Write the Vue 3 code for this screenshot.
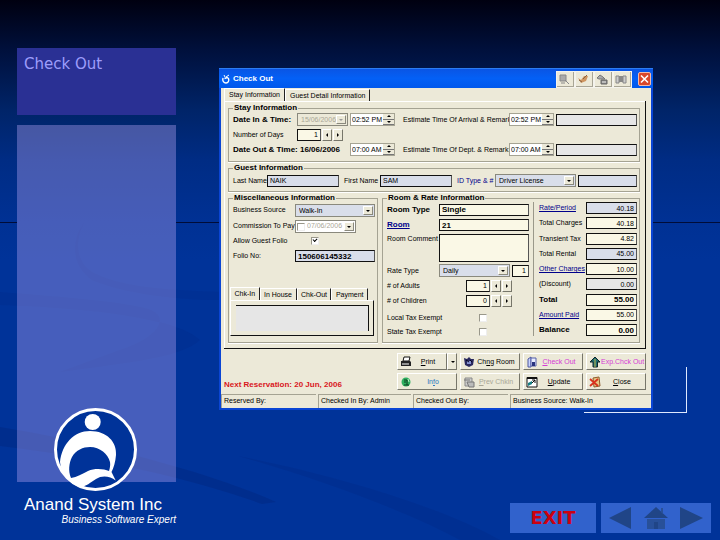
<script setup>
import { ref } from 'vue'

const tools = ['Find', 'Notes', 'Lock', 'Rooms']
const timeRows = [
  { label: 'Estimate Time Of Arrival & Remark:', time: '02:52 PM' },
  { label: 'Estimate Time Of Dept. & Remark:', time: '07:00 AM' },
]
const miscTabs = ['Chk-In', 'In House', 'Chk-Out', 'Payment']
const charges = [
  { id: 'rate', label: 'Rate/Period', value: '40.18', link: true, tone: 'blue' },
  { id: 'charges', label: 'Total Charges', value: '40.18' },
  { id: 'transient', label: 'Transient Tax', value: '4.82' },
  { id: 'rental', label: 'Total Rental', value: '45.00', tone: 'blue' },
  { id: 'other', label: 'Other Charges', value: '10.00', link: true },
  { id: 'discount', label: '(Discount)', value: '0.00', tone: 'grey' },
  { id: 'total', label: 'Total', value: '55.00', bold: true },
  { id: 'paid', label: 'Amount Paid', value: '55.00', link: true },
  { id: 'balance', label: 'Balance', value: '0.00', bold: true },
]
const counters = [
  { id: 'adults', label: '# of Adults', value: '1' },
  { id: 'children', label: '# of Children', value: '0' },
]
const status = ['Reserved By:', 'Checked In By: Admin', 'Checked Out By:', 'Business Source: Walk-In']
const allowGuest = ref(true)
</script>

<template>
  <div class="slide">
    <svg class="backdrop" viewBox="0 0 720 540" preserveAspectRatio="none" aria-hidden="true">
      <path d="M84 223C74 240 76 262 92 272C120 288 170 290 220 292V300C170 300 120 292 92 280C70 264 72 240 84 223Z" fill="#001a66" opacity=".09" />
      <path d="M0 292C60 297 120 301 148 309C172 317 158 338 120 350L60 372C130 362 180 358 200 340C180 320 100 308 0 305Z" fill="#001a66" opacity=".09" />
      <path d="M0 427C80 440 200 468 276 502L262 504C190 478 100 458 0 446Z" fill="#001a66" opacity=".22" />
      <path d="M238 456C330 474 440 506 500 540H460C400 508 310 476 238 456Z" fill="#001a66" opacity=".12" />
      <path d="M0 222.500H17M176 222.500H720" stroke="#000c38" stroke-width="1" />
    </svg>

    <aside class="side">
      <h1 class="heading">Check Out</h1>
      <div class="panel">
        <svg class="logo" viewBox="0 0 83 83" role="img" aria-label="Anand System">
          <circle cx="41.500" cy="41.500" r="40" fill="#003399" stroke="#fff" stroke-width="3" />
          <circle cx="38.700" cy="14" r="8" fill="#fff" />
          <path d="M6 54C8 36 20 23 36 23C53 23 63 34 62 47C61.500 54 59.500 60 57.500 64L61.700 72.500C56 68 48 67 42 71C37 74 32 79 25 79C14 74 7 66 6 54Z" fill="#fff" />
          <path d="M17 70C14 63 15 55 18 49C22 42 29 39 36 39C46 39 54 46 56 54C56.500 57 56 60 55 63C50 61 41 60 34 63C28 66 23 69 17 70Z" fill="#003399" />
        </svg>
      </div>
    </aside>

    <main class="stage">
      <form class="window" @submit.prevent>
        <header class="titlebar">
          <svg class="app-icon" viewBox="0 0 10 10" aria-hidden="true">
            <path d="M2 4C1 7 3 9 5 9S8.500 7 7.500 4.500L6 3.500L3.500 4.500" fill="none" stroke="#fff" stroke-width="1.400" />
            <path d="M5 3L8 1M3 1L4 3" stroke="#fff" />
          </svg>
          <span class="title">Check Out</span>
          <div class="tools">
            <button v-for="(t, i) in tools" :key="t" type="button" class="tool" :aria-label="t">
              <svg viewBox="0 0 14 13" aria-hidden="true">
                <template v-if="i === 0"><path d="M3 2H9V8H3Z" fill="#aaa" stroke="#888" /><path d="M4 10H8M8 7L12 11" stroke="#888" fill="none" /></template>
                <template v-else-if="i === 1"><path d="M2 5L5 7L8 3L12 3L10 8L5 10Z" fill="#cf9560" /><path d="M7 6L11 2M3 7L6 9" stroke="#896342" /></template>
                <template v-else-if="i === 2"><path d="M2 5L5 2L8 4L10 6H4Z" fill="#aaa" stroke="#777" /><path d="M6 7H12V11H6Z" fill="#888" stroke="#666" /><path d="M7 9H11" stroke="#eee" /></template>
                <template v-else><path d="M2 3H5V10H2ZM9 3H12V10H9Z" fill="#ccc" stroke="#888" /><path d="M5 3H9V9H5Z" fill="#888" /></template>
              </svg>
            </button>
          </div>
          <button type="button" class="close" aria-label="Close window">
            <svg viewBox="0 0 11 12" aria-hidden="true"><path d="M2 2.500L9 9.500M9 2.500L2 9.500" stroke="#fff" stroke-width="1.600" /></svg>
          </button>
        </header>

        <div class="tabs">
          <button type="button" class="tab active">Stay Information</button>
          <button type="button" class="tab">Guest Detail Information</button>
        </div>

        <div class="page">
          <fieldset class="group stay">
            <legend>Stay Information</legend>
            <div class="stay-row">
              <label class="bold" for="date-in">Date In &amp; Time:</label>
              <span class="combo disabled"><input id="date-in" value="15/06/2006" disabled /><button type="button" class="arrow" disabled aria-label="Open calendar"></button></span>
              <span class="spin"><input value="02:52 PM" aria-label="Time in" /><span class="steps"><button type="button" class="up" aria-label="Later"></button><button type="button" class="down" aria-label="Earlier"></button></span></span>
              <label for="remark-0">{{ timeRows[0].label }}</label>
              <span class="spin"><input :value="timeRows[0].time" aria-label="Estimated arrival" /><span class="steps"><button type="button" class="up" aria-label="Later"></button><button type="button" class="down" aria-label="Earlier"></button></span></span>
              <input id="remark-0" class="field grey" />
            </div>
            <div class="stay-row">
              <label for="days">Number of Days</label>
              <span class="counter"><input id="days" class="field num" value="1" /><button type="button" class="step prev" aria-label="Fewer"></button><button type="button" class="step next" aria-label="More"></button></span>
            </div>
            <div class="stay-row">
              <span class="bold wide">Date Out &amp; Time: 16/06/2006</span>
              <span class="spin"><input value="07:00 AM" aria-label="Time out" /><span class="steps"><button type="button" class="up" aria-label="Later"></button><button type="button" class="down" aria-label="Earlier"></button></span></span>
              <label for="remark-1">{{ timeRows[1].label }}</label>
              <span class="spin"><input :value="timeRows[1].time" aria-label="Estimated departure" /><span class="steps"><button type="button" class="up" aria-label="Later"></button><button type="button" class="down" aria-label="Earlier"></button></span></span>
              <input id="remark-1" class="field grey" />
            </div>
          </fieldset>

          <fieldset class="group guest">
            <legend>Guest Information</legend>
            <div class="guest-row">
              <label for="last">Last Name</label>
              <input id="last" class="field blue" value="NAIK" />
              <label class="inset" for="first">First Name</label>
              <input id="first" class="field blue" value="SAM" />
              <label class="inset navy" for="idtype">ID Type &amp; #</label>
              <span class="combo blue"><select id="idtype"><option>Driver License</option></select><span class="arrow"></span></span>
              <input class="field blue" aria-label="ID number" />
            </div>
          </fieldset>

          <div class="columns">
            <fieldset class="group misc">
              <legend>Miscellaneous Information</legend>
              <div class="misc-form">
                <label for="source">Business Source</label>
                <span class="combo blue"><select id="source"><option>Walk-In</option></select><span class="arrow"></span></span>
                <label for="commission">Commission To Pay</label>
                <span class="combo disabled white short"><input type="checkbox" class="check" aria-label="Use commission date" /><input id="commission" value="07/06/2006" disabled /><button type="button" class="arrow" aria-label="Open calendar"></button></span>
                <label for="allow">Allow Guest Folio</label>
                <input id="allow" v-model="allowGuest" type="checkbox" class="check allow" />
                <label for="folio">Folio No:</label>
                <input id="folio" class="field blue bold" value="150606145332" />
              </div>
              <div class="notes">
                <div class="tabs small">
                  <button v-for="(t, i) in miscTabs" :key="t" type="button" class="tab" :class="{ active: i === 0 }">{{ t }}</button>
                </div>
                <div class="notes-page"><textarea aria-label="Notes"></textarea></div>
              </div>
            </fieldset>

            <fieldset class="group room">
              <legend>Room &amp; Rate Information</legend>
              <div class="room-form">
                <label class="bold" for="roomtype">Room Type</label>
                <input id="roomtype" class="field bold" value="Single" />
                <a class="bold" href="#room">Room</a>
                <input id="room" class="field bold" value="21" aria-label="Room" />
                <label class="top" for="comment">Room Comment</label>
                <textarea id="comment" class="field"></textarea>
                <label for="ratetype">Rate Type</label>
                <span class="rate"><span class="combo blue"><select id="ratetype"><option>Daily</option></select><span class="arrow"></span></span><input class="field num" value="1" aria-label="Rate count" /></span>
                <template v-for="c in counters" :key="c.id">
                  <label :for="c.id">{{ c.label }}</label>
                  <span class="counter indent"><input :id="c.id" class="field num" :value="c.value" /><button type="button" class="step prev" aria-label="Fewer"></button><button type="button" class="step next" aria-label="More"></button></span>
                </template>
                <label for="local">Local Tax Exempt</label>
                <input id="local" type="checkbox" class="check tax" />
                <label for="state">State Tax Exempt</label>
                <input id="state" type="checkbox" class="check tax" />
              </div>
              <div class="charges">
                <div v-for="c in charges" :key="c.id" class="charge" :class="{ bold: c.bold }">
                  <a v-if="c.link" :href="'#' + c.id">{{ c.label }}</a>
                  <label v-else :for="c.id">{{ c.label }}</label>
                  <input :id="c.id" class="field num" :class="c.tone" :value="c.value" :aria-label="c.label" />
                </div>
              </div>
            </fieldset>
          </div>
        </div>

        <div class="footer">
          <p class="next-res">Next Reservation: 20 Jun, 2006</p>
          <div class="actions">
            <div class="split">
              <button type="button" class="btn">
                <svg viewBox="0 0 12 12" aria-hidden="true"><path d="M4 1H10L9 5H3Z" fill="#fff" stroke="#111" /><path d="M1 5H10L11 6V10H1Z" fill="#222" /><path d="M2 8H9" stroke="#fff" /></svg>
                <span><u>P</u>rint</span>
              </button>
              <button type="button" class="btn drop" aria-label="Print options"></button>
            </div>
            <button type="button" class="btn">
              <svg viewBox="0 0 12 12" aria-hidden="true"><path d="M1 2L4 3L6 1L8 3L11 3L10 9L6 11L2 9Z" fill="#28285f" /><path d="M4 5H8V8H4Z" fill="#8490cf" /><path d="M3 4L6 6M7 4L9 6" stroke="#050520" /></svg>
              <span>Ch<u>n</u>g Room</span>
            </button>
            <button type="button" class="btn pink">
              <svg viewBox="0 0 12 12" aria-hidden="true"><path d="M2 3L5 1V11H2Z" fill="#c9d4ff" stroke="#4d57a0" /><path d="M5 2H10V10H5Z" fill="#e8ecff" stroke="#5661a8" /><path d="M6 6H9V10H6Z" fill="#29347f" /></svg>
              <span><u>C</u>heck Out</span>
            </button>
            <button type="button" class="btn pink">
              <svg viewBox="0 0 12 12" aria-hidden="true"><path d="M6 1L11 6H8.500V11H4V6H1Z" fill="#1e6b70" stroke="#10262b" /><path d="M6 3V11" stroke="#c6b84a" /></svg>
              <span>Exp.Chck Out</span>
            </button>
            <button type="button" class="btn cyan">
              <svg viewBox="0 0 12 12" aria-hidden="true"><circle cx="6" cy="6" r="4.500" fill="#2fb060" /><path d="M4 4H7V9M4 9H9M4 6H6" stroke="#0a3d20" fill="none" /><path d="M8 3L9 6" stroke="#b7f2c3" /></svg>
              <span>In<u>f</u>o</span>
            </button>
            <button type="button" class="btn" disabled>
              <svg viewBox="0 0 12 12" aria-hidden="true"><path d="M2 2H9V10H2Z" fill="#ccc" stroke="#888" /><path d="M1 4H7M4 6H11V11H6Z" stroke="#777" fill="#bbb" /></svg>
              <span><u>P</u>rev Chkin</span>
            </button>
            <button type="button" class="btn">
              <svg viewBox="0 0 12 12" aria-hidden="true"><path d="M1 1.500H11V11H1Z" fill="#fff" stroke="#111" /><path d="M1 2H11" stroke="#111" stroke-width="2" /><path d="M2 10V7L6 5V8Z" fill="#177e84" /><path d="M6 7L9 4M6 4H9V7" stroke="#111" fill="none" /></svg>
              <span><u>U</u>pdate</span>
            </button>
            <button type="button" class="btn">
              <svg viewBox="0 0 12 12" aria-hidden="true"><path d="M4 2L10 1L11 10L5 11Z" fill="#e8c583" stroke="#8d5a2b" /><path d="M1 3L9 10M9 3L1 10" stroke="#d8321e" stroke-width="1.800" /></svg>
              <span><u>C</u>lose</span>
            </button>
          </div>
        </div>

        <div class="status"><span v-for="s in status" :key="s">{{ s }}</span></div>
      </form>
    </main>

    <div class="brand">
      <strong>Anand System Inc</strong>
      <em>Business Software Expert</em>
    </div>

    <nav class="nav">
      <a class="exit" href="#exit">EXIT</a>
      <div class="pager">
        <a href="#prev" aria-label="Previous"><svg viewBox="0 0 26 26"><path d="M2 13L24 2V24Z" /></svg></a>
        <a href="#home" aria-label="Home"><svg viewBox="0 0 26 26"><path d="M13 2L25 13H1Z" /><path class="soft" d="M4 14H22V24H4ZM18 3H20V9L18 7Z" /><path d="M11 17H15V24H11Z" /></svg></a>
        <a href="#next" aria-label="Next"><svg viewBox="0 0 26 26"><path d="M24 13L1 2V24Z" /></svg></a>
      </div>
    </nav>
  </div>
</template>

<style>
body { background: #003399; }
</style>

<style scoped>
*, *::before, *::after { box-sizing: border-box; }
.slide {
  position: relative;
  isolation: isolate;
  display: grid;
  grid-template-columns: 159px minmax(0, 1fr);
  grid-template-rows: 1fr auto;
  column-gap: 43px;
  min-height: 100vh;
  padding: 48px 9px 7px 17px;
  background: linear-gradient(#000010 0, #00103c 50px, #002468 110px, #002c84 160px, #003194 221px, #003399 260px);
  font-family: "Liberation Sans", Arial, sans-serif;
}
.backdrop { position: absolute; inset: 0; z-index: -1; width: 100%; height: 100%; }
.side { display: flex; flex-direction: column; gap: 10px; }
.heading {
  height: 67px;
  margin: 0;
  padding: 6px 7px;
  background: #2a3094;
  color: #9d9dfb;
  font: 400 15px/20px "DejaVu Sans", sans-serif;
}
.panel { position: relative; flex: 1; background: rgba(175, 161, 240, .4); }
.logo { position: absolute; left: 37px; bottom: -9px; width: 83px; height: 83px; }
.brand { display: flex; flex-direction: column; height: 51px; padding: 13px 0 0 7px; color: #fff; }
.brand strong { font-size: 17px; font-weight: 400; line-height: 20px; white-space: nowrap; }
.brand em { font-size: 10px; line-height: 10px; text-align: right; white-space: nowrap; }

.nav { display: flex; justify-content: flex-end; align-items: flex-end; gap: 5px; }
.exit, .pager { height: 30px; background: #3162cc; }
.exit { width: 86px; color: #cc0010; text-align: center; text-decoration: none; font: 700 18px/30px "DejaVu Sans", sans-serif; }
.pager { display: flex; justify-content: space-between; align-items: center; width: 110px; padding: 0 6px; }
.pager a, .pager svg { display: block; width: 26px; height: 26px; }
.pager svg { fill: #204587; }
.pager .soft { fill: #285099; }

.stage { position: relative; align-self: start; margin: 20px 58px 0 0; }
.stage::after {
  content: "";
  position: absolute;
  right: -34px;
  bottom: -3px;
  width: 103px;
  height: 46px;
  border: solid #dfe9ff;
  border-width: 0 1px 1px 0;
}
.window {
  position: relative;
  z-index: 1;
  border: solid #0a45d4;
  border-width: 0 2px 2px;
  background: #ece9d8;
  color: #000;
  font-family: "Liberation Sans", Arial, sans-serif;
  font-size: 7px;
  line-height: 10px;
  white-space: nowrap;
}
.window input, .window button, .window select, .window textarea {
  margin: 0;
  padding: 0;
  border: 0;
  border-radius: 0;
  font: inherit;
  color: inherit;
  min-width: 0;
  appearance: none;
  outline: none;
}
.window a { color: #00008b; }
.window .bold { font-size: 8px; font-weight: 700; }
.navy { color: #00008b; }
.titlebar {
  display: flex;
  align-items: center;
  height: 20px;
  margin: 0 -2px;
  padding: 0 2px;
  border-top: 1px solid #2d7cf2;
  background: linear-gradient(#0a55e4, #0360f6 50%, #0058ec);
  color: #fff;
}
.app-icon { width: 10px; height: 10px; }
.title { flex: 1; padding-left: 2px; font-size: 8px; font-weight: 700; }
.tools { display: flex; align-self: flex-end; justify-content: space-around; align-items: center; width: 76px; height: 17px; background: #f4f3ec; }
.window .tool { width: 17px; height: 15px; background: #ece9d8; border: solid #a9a696; border-width: 0 1px 1px 0; }
.tool svg { display: block; width: 14px; height: 13px; }
.window .close { width: 13px; height: 14px; margin-left: 6px; background: #d9482b; border: 1px solid #f3b8a8; border-radius: 2px; }
.close svg { display: block; width: 11px; height: 12px; }

.tabs { display: flex; height: 13px; padding-left: 3px; align-items: flex-end; }
.window .tab { height: 12px; padding: 0 4px; border: solid #fff; border-width: 1px 0 0 1px; border-right: 1px solid #222; background: #ece9d8; }
.window .tab.active { height: 13px; }
.page {
  display: flex;
  flex-direction: column;
  gap: 2px;
  margin: 0 5px 0 3px;
  padding: 3px 5px 5px 4px;
  border: solid #111;
  border-width: 0 1px 1px 0;
  box-shadow: inset 1px 1px 0 #fff;
}
.group { min-width: 0; margin: 0; padding: 0 2px 0 4px; border: 1px solid #a5a393; box-shadow: 0 1px 0 #fff; }
.group legend { padding: 0 1px; font-size: 8px; font-weight: 700; line-height: 8px; }
.stay { height: 58px; }
.stay-row { display: grid; grid-template-columns: 62px 51px 51px 104px 45px minmax(0, 1fr); column-gap: 2px; align-items: center; height: 15px; }
.stay-row .wide { grid-column: span 2; }
.stay-row .spin { width: 45px; }
.window .field {
  width: 100%;
  height: 12px;
  padding: 0 2px;
  border: 1px solid #111;
  border-right-color: #555;
  background: #faf8e6;
  resize: none;
}
.window .blue { background: #d9deea; }
.window .grey { background: #e6e6e6; }
.window .num { text-align: right; }
.combo { position: relative; display: flex; width: 100%; height: 13px; padding: 1px; border: 1px solid #8a897d; background: #fff; }
.window .combo input, .window .combo select { flex: 1; width: 100%; padding-left: 2px; background: transparent; }
.combo.disabled { background: #ece9d8; color: #aaa797; }
.combo.white { background: #fff; }
.window .arrow { position: relative; flex: none; width: 10px; background: #ece9d8; border: 1px solid #8a897d; border-top-color: #fff; border-left-color: #fff; }
.arrow::after { content: ""; position: absolute; left: 2px; top: 3px; border: 2px solid transparent; border-top-color: #000; border-bottom: 0; }
.arrow:disabled::after { border-top-color: #999; }
.spin { display: flex; height: 13px; border: 1px solid #a5a393; background: #fff; }
.window .spin input { flex: 1; width: 100%; padding-left: 1px; background: transparent; }
.steps { display: flex; flex-direction: column; width: 11px; }
.window .steps button { position: relative; flex: 1; background: #ece9d8; border-bottom: 1px solid #777; }
.steps button::after { content: ""; position: absolute; left: 4px; top: 1px; border: 2px solid transparent; }
.steps .up::after { border-bottom-color: #000; border-top: 0; }
.steps .down::after { border-top-color: #000; border-bottom: 0; }
.counter { display: flex; gap: 1px; width: 46px; }
.window .counter .field { flex: 1; width: 20px; }
.window .step { position: relative; width: 10px; height: 12px; background: #ece9d8; border: 1px solid #77766a; border-top-color: #fff; border-left-color: #fff; }
.step::after { content: ""; position: absolute; left: 3px; top: 3px; border: 2px solid transparent; }
.prev::after { border-right-color: #000; border-left: 0; }
.next::after { border-left-color: #000; border-right: 0; }
.guest { height: 28px; }
.guest-row { display: grid; grid-template-columns: 32px 72px 37px 72px 39px 81px minmax(0, 1fr); column-gap: 2px; align-items: center; height: 17px; }
.guest-row .inset { padding-left: 3px; }

.columns { display: grid; grid-template-columns: 150px minmax(0, 1fr); gap: 4px; height: 149px; }
.misc { display: flex; flex-direction: column; }
.misc-form { display: grid; grid-template-columns: 60px minmax(0, 1fr); grid-template-rows: 16px 16px 14px 16px; column-gap: 2px; align-items: center; }
.misc-form .short { width: 61px; }
.window .check { position: relative; width: 8px; height: 8px; background: #fff; border: 1px solid #99978a; border-right-color: #eee; border-bottom-color: #eee; }
.window .check:checked::after { content: ""; position: absolute; left: 1px; top: 0; width: 4px; height: 3px; border: solid #000; border-width: 0 0 1px 1px; transform: rotate(-45deg); }
.window .combo .check { flex: none; width: 8px; padding: 0; margin-top: 1px; }
.window .allow { margin-left: 16px; }
.notes { margin: 22px 1px 0 -3px; }
.tabs.small { height: 14px; padding: 0; }
.tabs.small .tab { flex: auto; padding: 0 2px; }
.tabs.small .tab:last-child { margin-right: 6px; }
.notes-page { height: 36px; padding: 4px 4px 4px 5px; border: 1px solid #fff; border-right-color: #111; border-bottom-color: #111; }
.window .notes-page textarea { display: block; width: 100%; height: 26px; background: #e6e6e6; border: solid #111; border-width: 1px 1px 0 0; resize: none; }

.room { display: grid; grid-template-columns: minmax(0, 142px) minmax(0, 1fr); column-gap: 4px; }
.room-form { display: grid; grid-template-columns: 50px minmax(0, 1fr); grid-template-rows: 15px 16px 30px 15px 15px 15px 19px 10px; column-gap: 2px; align-items: center; }
.room-form .top { align-self: start; padding-top: 1px; }
.window .room-form textarea { height: 28px; }
.rate { display: grid; grid-template-columns: minmax(0, 1fr) 17px; gap: 2px; align-items: center; }
.indent { margin-left: 27px; }
.window .tax { margin-left: 40px; }
.charges { display: flex; flex-direction: column; justify-content: space-between; height: 134px; padding-left: 5px; border-left: 1px solid #9a988a; }
.charge { display: grid; grid-template-columns: 46px minmax(0, 1fr); column-gap: 1px; align-items: center; }

.footer { display: grid; grid-template-columns: minmax(0, 1fr) 249px; gap: 4px; height: 45px; padding: 4px 5px 0 3px; }
.next-res { align-self: end; margin: 0 0 4px; color: #d9161c; font-size: 8px; font-weight: 700; }
.actions { display: grid; grid-template-columns: repeat(4, minmax(0, 1fr)); grid-auto-rows: 17px; gap: 3px; align-content: start; }
.window .btn { display: flex; align-items: center; min-width: 0; height: 17px; padding: 0 2px; background: #ece9d8; border: 1px solid #fff; border-right-color: #77766a; border-bottom-color: #77766a; }
.btn svg { flex: none; width: 12px; height: 12px; }
.btn span { flex: 1; text-align: center; }
.split { display: grid; grid-template-columns: minmax(0, 1fr) 10px; }
.window .drop::after { content: ""; margin-left: 1px; border: 2px solid transparent; border-top-color: #000; border-bottom: 0; }
.window .pink { color: #d63bd6; }
.window .cyan { color: #2878c0; }
.window .btn:disabled { color: #aaa797; }
.status { display: grid; grid-template-columns: 95px 93px 95px minmax(0, 1fr); gap: 2px; height: 14px; }
.status span { padding: 1px 2px; border: solid #a5a393; border-width: 1px 0 0 1px; }
</style>
